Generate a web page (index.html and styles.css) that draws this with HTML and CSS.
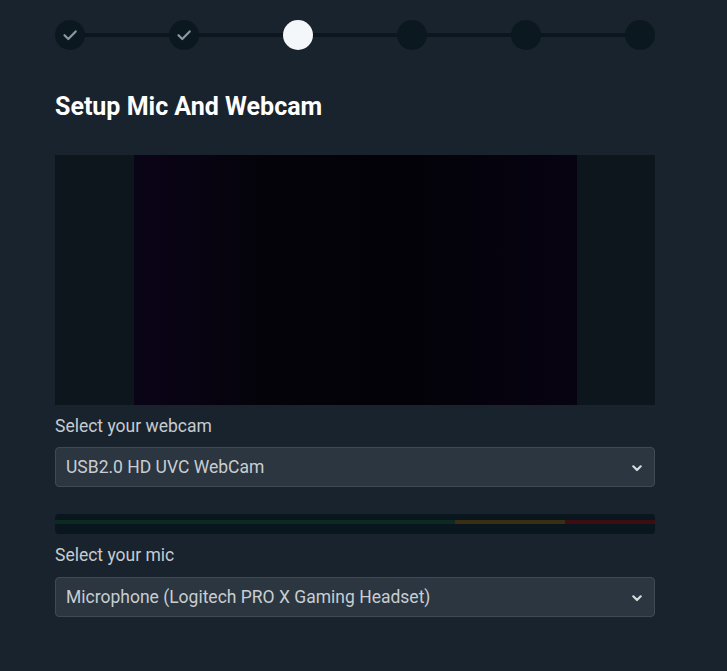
FILE: index.html
```html
<!DOCTYPE html>
<html>
<head>
<meta charset="utf-8">
<link rel="stylesheet" href="styles.css">
</head>
<body>
<div class="page">
  <div class="stepper">
    <div class="line"></div>
    <div class="step done"><svg viewBox="0 0 30 30" width="30" height="30"><path d="M9.5 15.2l3.8 3.8 7.4-7.6" fill="none" stroke="#8e979e" stroke-width="2.2" stroke-linecap="round" stroke-linejoin="round"/></svg></div>
    <div class="step done"><svg viewBox="0 0 30 30" width="30" height="30"><path d="M9.5 15.2l3.8 3.8 7.4-7.6" fill="none" stroke="#8e979e" stroke-width="2.2" stroke-linecap="round" stroke-linejoin="round"/></svg></div>
    <div class="step active"></div>
    <div class="step"></div>
    <div class="step"></div>
    <div class="step"></div>
  </div>

  <h1 class="title">Setup Mic And Webcam</h1>

  <div class="preview">
    <div class="video"></div>
  </div>

  <label class="label">Select your webcam</label>
  <div class="select">
    <span>USB2.0 HD UVC WebCam</span>
    <svg class="chev" viewBox="0 0 10 7" width="10" height="7"><path d="M1.3 1.3L5 5l3.7-3.7" fill="none" stroke="#d6dadd" stroke-width="2.2" stroke-linecap="round" stroke-linejoin="round"/></svg>
  </div>

  <div class="meter">
    <div class="bar">
      <div class="seg green"></div>
      <div class="seg yellow"></div>
      <div class="seg red"></div>
    </div>
  </div>

  <label class="label mic">Select your mic</label>
  <div class="select">
    <span>Microphone (Logitech PRO X Gaming Headset)</span>
    <svg class="chev" viewBox="0 0 10 7" width="10" height="7"><path d="M1.3 1.3L5 5l3.7-3.7" fill="none" stroke="#d6dadd" stroke-width="2.2" stroke-linecap="round" stroke-linejoin="round"/></svg>
  </div>
</div>
</body>
</html>
```

FILE: styles.css
```css
html, body {
  margin: 0;
  padding: 0;
  background: #19232d;
  font-family: Roboto, "Liberation Sans", sans-serif;
}
.page {
  width: 600px;
  margin-left: 55px;
  padding-top: 20px;
  display: flex;
  flex-direction: column;
}
.stepper {
  position: relative;
  display: flex;
  justify-content: space-between;
  height: 30px;
}
.stepper .line {
  position: absolute;
  left: 15px;
  right: 15px;
  top: 13px;
  height: 4px;
  background: #0b161e;
}
.step {
  position: relative;
  width: 30px;
  height: 30px;
  border-radius: 50%;
  background: #0b1820;
}
.step svg { display: block; }
.step.active { background: #f4f7fa; }
.title {
  margin: 0;
  margin-top: 43px;
  font-size: 25px;
  line-height: 28px;
  font-weight: 700;
  color: #ffffff;
}
.preview {
  margin-top: 34px;
  height: 250px;
  background: #0c161c;
  display: flex;
  justify-content: center;
}
.video {
  width: 443px;
  height: 250px;
  background: linear-gradient(90deg, #0b0418 0%, #04030a 30%, #030208 60%, #070312 100%);
}
.label {
  margin-top: 10px;
  font-size: 17.5px;
  line-height: 22px;
  color: #c6cbd0;
}
.label.mic { margin-top: 10px; }
.select {
  margin-top: 10px;
  height: 38px;
  border: 1px solid #3e4a54;
  border-radius: 4px;
  background: #2b3640;
  display: flex;
  align-items: center;
  justify-content: space-between;
  padding: 0 12px 0 10px;
  color: #c8cdd2;
  font-size: 17.5px;
}
.label.mic + .select { margin-top: 11px; }
.chev { margin-top: 2px; }
.meter {
  margin-top: 27px;
  height: 20px;
  border-radius: 4px;
  background: #0a161d;
  display: flex;
  align-items: flex-start;
}
.bar {
  margin-top: 6px;
  width: 100%;
  height: 4px;
  display: flex;
}
.seg.green { width: 400px; background: #0c2a22; }
.seg.yellow { width: 110px; background: #3a2f15; }
.seg.red { flex: 1; background: #3d0d13; }
```
